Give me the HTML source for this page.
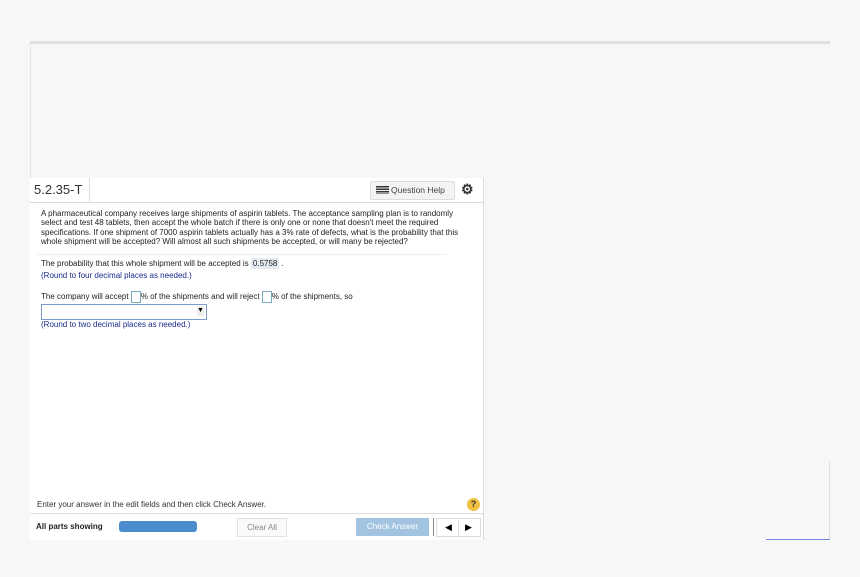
<!DOCTYPE html><html><head><style>
body{margin:0;width:860px;height:577px;background:#f7f7f7;position:relative;font-family:"Liberation Sans",Arial,sans-serif;overflow:hidden}
.a{position:absolute}
.t{font-size:8px;color:#222;white-space:nowrap}
.b{color:#1a2a8a}
</style></head><body>
<div class="a" style="left:30px;top:41px;width:800px;height:3px;background:#dde0e3"></div>
<div class="a" style="left:30px;top:44px;width:1px;height:134px;background:#e6e6e6"></div>
<div class="a" style="left:30px;top:178px;width:453px;height:362px;background:#fff;border-right:1px solid #ddd"></div>
<div class="a" style="left:30px;top:202px;width:454px;height:1px;background:#d8d8e0"></div>
<div class="a" style="left:89px;top:178px;width:1px;height:24px;background:#ddd"></div>
<div class="a" style="left:34px;top:182px;font-size:13px;color:#333">5.2.35-T</div>
<div class="a" style="left:370px;top:181px;width:83px;height:17px;background:#f3f3f3;border:1px solid #ddd;border-radius:2px"></div>
<div class="a" style="left:376px;top:186px;width:13px;height:8px;background:repeating-linear-gradient(#333 0 1.5px,transparent 1.5px 2.5px)"></div>
<div class="a" style="left:391px;top:185px;font-size:8.5px;color:#444">Question Help</div>
<div class="a" style="left:461px;top:181px;font-size:14px;color:#333;font-weight:bold">⚙</div>
<div class="a t" style="left:41px;top:209px;line-height:9.3px">A pharmaceutical company receives large shipments of aspirin tablets. The acceptance sampling plan is to randomly<br>select and test 48 tablets, then accept the whole batch if there is only one or none that doesn't meet the required<br>specifications. If one shipment of 7000 aspirin tablets actually has a 3% rate of defects, what is the probability that this<br>whole shipment will be accepted? Will almost all such shipments be accepted, or will many be rejected?</div>
<div class="a" style="left:37px;top:254px;width:410px;height:1px;background:#eee"></div>
<div class="a t" style="left:41px;top:259px">The probability that this whole shipment will be accepted is <span style="background:#e4ebf3;padding:1px 2px">0.5758</span> .</div>
<div class="a t b" style="left:41px;top:271px">(Round to four decimal places as needed.)</div>
<div class="a t" style="left:41px;top:291px">The company will accept <span style="display:inline-block;width:8px;height:10px;border:1px solid #7ab;vertical-align:middle"></span>% of the shipments and will reject <span style="display:inline-block;width:8px;height:10px;border:1px solid #7ab;vertical-align:middle"></span>% of the shipments, so</div>
<div class="a" style="left:41px;top:304px;width:164px;height:14px;border:1px solid #7a9ad0"></div>
<div class="a" style="left:197px;top:306px;width:7px;height:10px;background:#eee;font-size:7px;line-height:10px;text-align:center">▼</div>
<div class="a t b" style="left:41px;top:320px">(Round to two decimal places as needed.)</div>
<div class="a t" style="left:37px;top:500px;color:#333">Enter your answer in the edit fields and then click Check Answer.</div>
<div class="a" style="left:467px;top:498px;width:13px;height:13px;border-radius:50%;background:#f0c040;font-size:9px;font-weight:bold;text-align:center;line-height:13px;color:#333">?</div>
<div class="a" style="left:30px;top:513px;width:454px;height:1px;background:#ddd"></div>
<div class="a t" style="left:36px;top:522px;font-weight:bold;font-size:8px">All parts showing</div>
<div class="a" style="left:119px;top:521px;width:78px;height:11px;background:#4a8ccc;border-radius:3px"></div>
<div class="a" style="left:237px;top:518px;width:48px;height:17px;border:1px solid #e2e2e2;background:#fafafa;font-size:8px;color:#888;text-align:center;line-height:17px">Clear All</div>
<div class="a" style="left:356px;top:518px;width:73px;height:18px;background:#a2c4e0;font-size:8px;color:#fff;text-align:center;line-height:18px">Check Answer</div>
<div class="a" style="left:433px;top:518px;width:1px;height:18px;background:#888"></div>
<div class="a" style="left:436px;top:518px;width:43px;height:17px;border:1px solid #ddd;background:#fff;font-size:9px;line-height:17px"><span style="position:absolute;left:8px">◀</span><span style="position:absolute;left:21px;top:0;width:1px;height:17px;background:#ddd"></span><span style="position:absolute;left:28px">▶</span></div>
<div class="a" style="left:829px;top:462px;width:1px;height:78px;background:#d8e0ea"></div>
<div class="a" style="left:766px;top:539px;width:64px;height:1px;background:#6a8fe0"></div>
</body></html>
